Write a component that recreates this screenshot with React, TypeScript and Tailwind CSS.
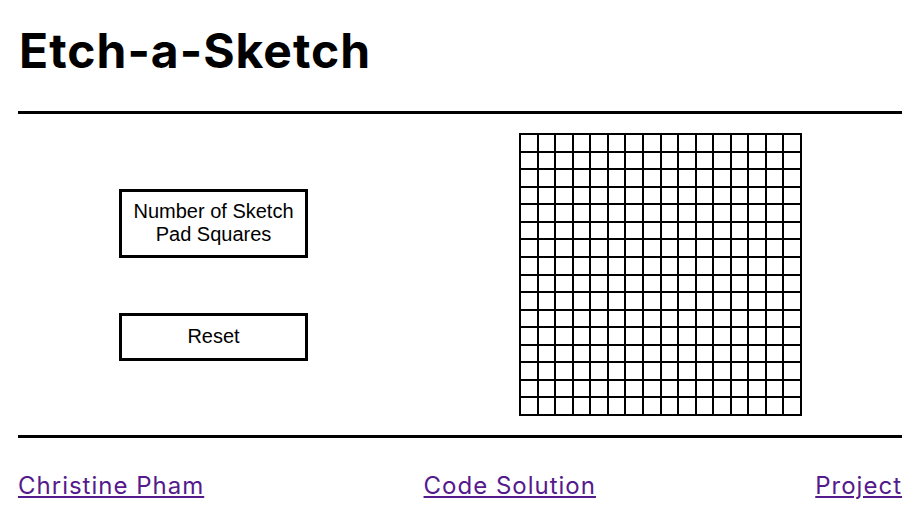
import React from "react";

export default function App() {
  const cells = Array.from({ length: 256 });
  return (
    <div className="w-[916px] h-[532px] bg-white text-black overflow-hidden">
      <div className="ml-[18px] w-[884px]">
        <h1
          className="pt-[22px] h-[111px] text-[48px] leading-[58px] font-bold pl-[1px] tracking-[1px]"
          style={{ fontFamily: "Inter, 'Open Sans', sans-serif" }}
        >
          Etch-a-Sketch
        </h1>
        <div className="h-[3px] bg-black" />
        <div className="flex items-center h-[321px]">
          <div
            className="ml-[101px] w-[189px] flex flex-col gap-[55px]"
            style={{ fontFamily: "'Liberation Sans', Arial, sans-serif" }}
          >
            <button className="h-[69px] border-[3px] border-black flex items-center justify-center text-center text-[20px] leading-[23px] bg-white">
              Number of Sketch
              <br />
              Pad Squares
            </button>
            <button className="h-[48px] border-[3px] border-black flex items-center justify-center text-[20px] leading-[23px] bg-white">
              Reset
            </button>
          </div>
          <div className="ml-[211px] w-[283px] h-[283px] border border-black grid grid-cols-[repeat(16,1fr)] grid-rows-[repeat(16,1fr)]">
            {cells.map((_, i) => (
              <div key={i} className="border border-black" />
            ))}
          </div>
        </div>
        <div className="h-[3px] bg-black" />
        <div
          className="flex justify-between pt-[33px] text-[24px] leading-[30px] tracking-[1px]"
          style={{ fontFamily: "Inter, 'Open Sans', sans-serif" }}
        >
          <a href="#" className="text-[#551a8b] underline">Christine Pham</a>
          <a href="#" className="text-[#551a8b] underline">Code Solution</a>
          <a href="#" className="text-[#551a8b] underline">Project</a>
        </div>
      </div>
    </div>
  );
}
